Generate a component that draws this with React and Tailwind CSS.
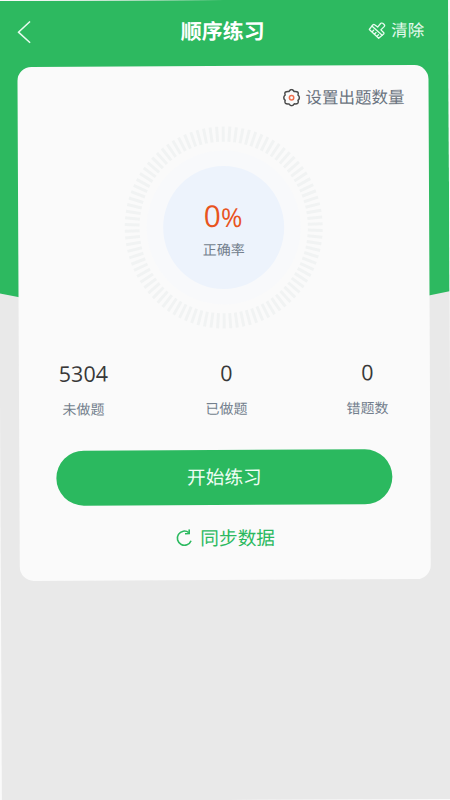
const stats = [
  { label: "未做题", value: 5304 },
  { label: "已做题", value: 0 },
  { label: "错题数", value: 0 },
];

const TICKS = 94;

function BackIcon() {
  return (
    <svg width="14" height="24" viewBox="0 0 14 24" fill="none">
      <path d="M12.8.6 1.2 11.2l11.6 10.6" stroke="#e6fbee" strokeWidth="1.5" />
    </svg>
  );
}

function BrushIcon() {
  return (
    <svg
      width="18"
      height="18"
      viewBox="0 0 18 18"
      fill="none"
      stroke="#e6fbee"
      strokeWidth="1.3"
      strokeLinejoin="round"
      strokeLinecap="round"
    >
      <path d="M6.4 2.4 9.4 4.8 12.4 1.2q1-1 2.1-.1l1.4 1.2q1 1 0 2.1L12.6 7.6l2.7 2.6q.8.8 0 1.6l-1.4 1.3L3.6 3.8l1.2-1.3q.8-.8 1.6-.1Z" />
      <path d="M3.6 3.8 1 7.2l9.4 8.8 3.5-2.9M3.6 9.6 5.4 8M6 11.9l1.8-1.6M8.4 14.1l1.8-1.6" />
    </svg>
  );
}

function GearIcon() {
  return (
    <svg width="18" height="18" viewBox="0 0 18 18" fill="none">
      <path
        d="M6.4 2.8Q9-1 11.6 2.8q5.4-.5 3.8 3.5 2.8 2.7 0 5.4 1.6 4-3.8 3.5-2.6 3.8-5.2 0-5.4.5-3.8-3.5-2.8-2.7 0-5.4-1.6-4 3.8-3.5Z"
        stroke="#4a4a4a"
        strokeWidth="1.5"
        strokeLinejoin="round"
      />
      <circle cx="9" cy="9" r="2.2" stroke="#f0704f" strokeWidth="1.5" />
    </svg>
  );
}

function SyncIcon() {
  return (
    <svg
      width="17"
      height="18"
      viewBox="0 0 17 18"
      fill="none"
      stroke="#2bb95f"
      strokeWidth="1.6"
    >
      <path d="M15.4 11.6A7.1 7.1 0 1 1 13.2 3.4" />
      <path d="M13.6.2v4.2l-4.2.2" />
    </svg>
  );
}

function AccuracyRing() {
  return (
    <div className="relative w-[200px] h-[204px]">
      <svg
        className="absolute inset-0"
        width="200"
        height="204"
        viewBox="-99.5 -101.5 200 204"
      >
        {Array.from({ length: TICKS }, (_, i) => (
          <line
            key={i}
            x1="0"
            x2="0"
            y1="-100"
            y2="-85"
            stroke="#f1f3f3"
            strokeWidth="3"
            transform={`scale(0.99 1.01) rotate(${(i * 360) / TICKS})`}
          />
        ))}
        <circle r="77" fill="#f8f9fb" />
        <ellipse rx="60.5" ry="61.5" fill="#edf3fc" />
      </svg>
      <div className="relative flex flex-col items-center pt-[70px]">
        <div className="-ml-px text-[#e8541e] leading-[40px]">
          <span className="text-[30px]">0</span>
          <span className="text-[26px]">%</span>
        </div>
        <div className="-mt-px text-sm text-[#737f8d]">正确率</div>
      </div>
    </div>
  );
}

function App() {
  return (
    <div className="w-[450px] h-[800px] overflow-hidden bg-[#fafafa] font-['Open_Sans','Noto_Sans_CJK_SC',sans-serif]">
      <div className="relative w-full h-full bg-[#e9e9e9] rotate-[-0.27deg]">
        <svg
          className="absolute inset-0"
          width="450"
          height="340"
          viewBox="0 0 450 340"
        >
          <path d="M0 0H450V292.3Q225 340 0 292.3Z" fill="#2db960" />
        </svg>

        <div className="relative">
          <header className="grid grid-cols-3 items-center h-[66px] pl-[19px] pr-6 pb-[3px] text-white">
            <div>
              <BackIcon />
            </div>
            <h1 className="pl-1 pt-px text-[21px] font-bold text-center">顺序练习</h1>
            <div className="flex items-center justify-end gap-[5px] text-[16.5px] text-[#e6fbee]">
              <BrushIcon />
              <span>清除</span>
            </div>
          </header>

          <main className="ml-[19px] w-[411px] h-[514px] rounded-[14px] bg-[#fafafa] flex flex-col items-center">
            <div className="self-end flex items-center gap-[5px] h-[60px] pt-1 pr-6 text-[16.5px] text-[#6b7480]">
              <GearIcon />
              <span>设置出题数量</span>
            </div>

            <AccuracyRing />

            <div className="flex justify-between w-full pl-[43px] pr-[41px] mt-[25px]">
              {stats.map((item) => (
                <div
                  key={item.label}
                  className="flex flex-col items-center w-[43px] nth-2:ml-[2px]"
                >
                  <div className="text-[21.5px] leading-[36px] text-[#383838]">
                    {item.value}
                  </div>
                  <div className="mt-2 text-sm text-[#737f8d]">{item.label}</div>
                </div>
              ))}
            </div>

            <button className="-ml-px mt-[31px] w-[336px] h-[55px] rounded-full bg-[#2bb95f] text-[#effdf4] text-[18.7px]">
              开始练习
            </button>

            <button className="mt-[19px] flex items-center gap-2 text-[18.7px] text-[#2bb95f]">
              <SyncIcon />
              <span>同步数据</span>
            </button>
          </main>
        </div>
      </div>
    </div>
  );
}

export default App;
